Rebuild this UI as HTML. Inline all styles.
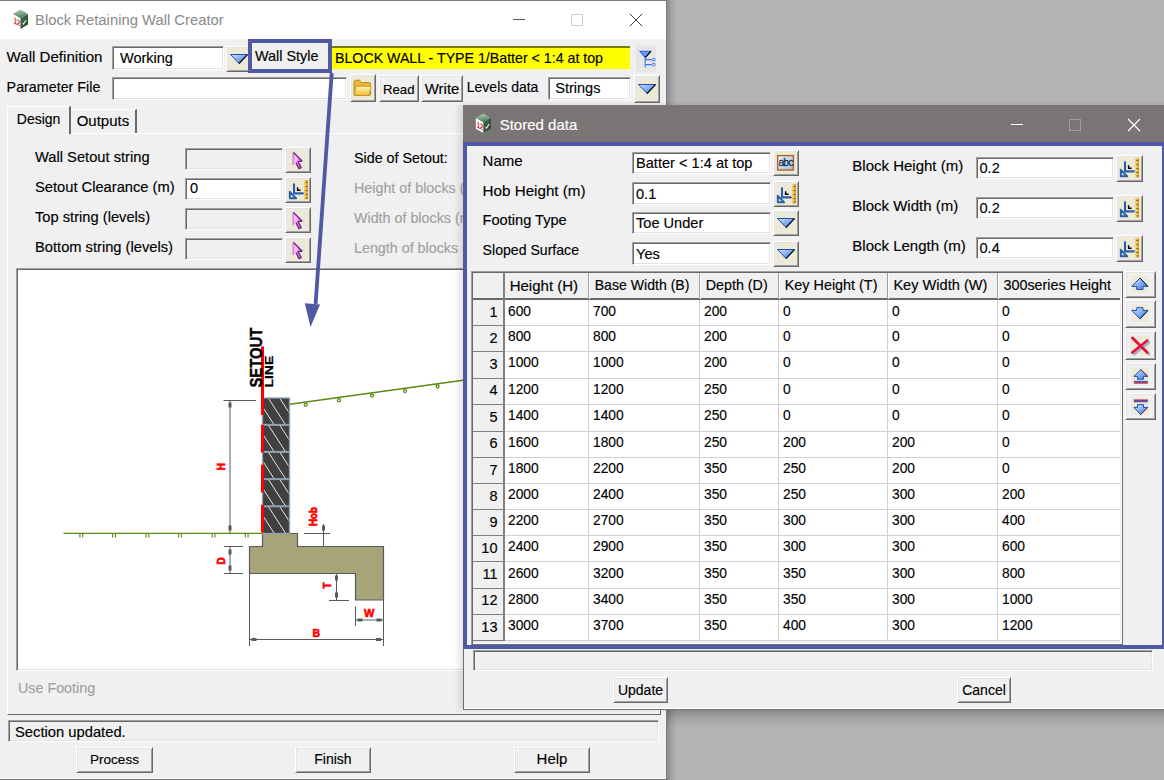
<!DOCTYPE html>
<html><head><meta charset="utf-8"><title>Block Retaining Wall Creator</title>
<style>
html,body{margin:0;padding:0;}
body{width:1164px;height:780px;overflow:hidden;position:relative;background:#b4b4b4;font-family:"Liberation Sans",sans-serif;}
.a{position:absolute;box-sizing:border-box;}
.t{white-space:pre;line-height:1;-webkit-text-stroke:0.15px currentColor;}
svg.a{overflow:visible;}
</style></head><body>
<div class="a" style="left:667px;top:0px;width:10px;height:780px;background:linear-gradient(to right,#8a8a8a,#a4a4a4 45%,#b4b4b4);"></div>
<div class="a" style="left:0px;top:0px;width:667px;height:780px;background:#f0f0f0;border-top:1px solid #7a7a7a;border-right:1px solid #7e7e7e;box-sizing:border-box;"></div>
<div class="a" style="left:0px;top:1px;width:666px;height:38px;background:#fff;"></div>
<svg class="a" style="left:12px;top:9px" width="18" height="22" viewBox="0 0 18 22"><defs><linearGradient id="gc" x1="0" y1="0" x2="0.3" y2="1"><stop offset="0" stop-color="#b4d4bc"/><stop offset="1" stop-color="#4e7e62"/></linearGradient><linearGradient id="gc2" x1="0" y1="0" x2="1" y2="1"><stop offset="0" stop-color="#3e6e52"/><stop offset="1" stop-color="#24482f"/></linearGradient></defs><polygon points="8.5,0.5 16,5 8.5,9.5 0.8,5" fill="url(#gc)"/><polygon points="0.8,5 8.5,9.5 8.5,20 0.8,15.8" fill="#fafafa"/><polygon points="8.5,9.5 16,5 16,15.5 8.5,20" fill="url(#gc2)"/><g transform="skewY(27)"><text x="2.6" y="13.2" font-family="Liberation Sans" font-size="8.5" font-weight="bold" fill="#d42a34" transform="scale(0.72,1)" letter-spacing="-0.3">12</text></g><path d="M11.2 15.6l3-4.6M10.6 14.8l2-0.9" stroke="#e8f0e8" stroke-width="1.1"/></svg>
<div class="a t " style="left:35.3px;top:12.33px;font-size:15.2px;color:#8a8a8a;-webkit-text-stroke:0;transform:scaleX(0.975);transform-origin:0 0;">Block Retaining Wall Creator</div>
<div class="a" style="left:513px;top:19px;width:12px;height:1px;background:#555;"></div>
<div class="a" style="left:571px;top:14px;width:12px;height:12px;border:1px solid #ccc;box-sizing:border-box;"></div>
<svg class="a" style="left:629px;top:13px" width="14" height="14" viewBox="0 0 14 14"><path d="M1 1L13 13M13 1L1 13" stroke="#444" stroke-width="1"/></svg>
<div class="a t " style="left:6.6px;top:49.22px;font-size:15.1px;color:#000;">Wall Definition</div>
<div class="a" style="left:112px;top:46px;width:112px;height:24px;background:#fff;border:1px solid;border-color:#a0a0a0 #fff #fff #a0a0a0;box-shadow:inset 1px 1px #696969,inset -1px -1px #e3e3e3;"></div>
<div class="a t " style="left:120px;top:51.13px;font-size:14.5px;color:#000;">Working</div>
<div class="a" style="left:226px;top:46px;width:26px;height:26px;background:#ece9d8;border:1px solid;border-color:#fff #696969 #696969 #fff;box-shadow:inset 1px 1px #e3e3e3,inset -1px -1px #a0a0a0;"></div>
<svg class="a" style="left:226px;top:46px" width="26" height="26" viewBox="0 0 26 26"><defs><linearGradient id="gd" x1="0" y1="0" x2="1" y2="1"><stop offset="0" stop-color="#cfe0ff"/><stop offset="1" stop-color="#3a78e0"/></linearGradient></defs><polygon points="4.5,8.5 21.5,8.5 13.0,17.5" fill="url(#gd)" stroke="#1f4fb0" stroke-width="1"/><path d="M21.5 8.5 L13.0 17.5" stroke="#101820" stroke-width="1.3"/></svg>
<div class="a t " style="left:255px;top:48.81px;font-size:14.4px;color:#000;">Wall Style</div>
<div class="a" style="left:331px;top:46px;width:299px;height:23px;background:#ffff00;border-top:2px solid #7a7a00;box-sizing:border-box;"></div>
<div class="a t " style="left:335px;top:50.98px;font-size:14.2px;color:#000;">BLOCK WALL - TYPE 1/Batter &lt; 1:4 at top</div>
<div class="a" style="left:636px;top:45px;width:20px;height:27px;background:#e6e6e6;"></div>
<svg class="a" style="left:636px;top:45px" width="20" height="27" viewBox="0 0 20 27"><polygon points="4,6.3 14.8,6.3 9.2,12.6" fill="#6aa0f0" stroke="#2a66d8" stroke-width="1.1"/><path d="M14.8 6.3L9.2 12.6" stroke="#000" stroke-width="1.2"/><path d="M9.2 12.6v10M9.2 14.6h6.5M9.2 19.6h6.5" stroke="#3a78e8" stroke-width="1.1" fill="none"/><ellipse cx="17.6" cy="14.6" rx="1.7" ry="1.3" fill="none" stroke="#3a78e8" stroke-width="1"/><ellipse cx="17.6" cy="19.6" rx="1.7" ry="1.3" fill="none" stroke="#3a78e8" stroke-width="1"/></svg>
<div class="a t " style="left:6.6px;top:79.50px;font-size:14.3px;color:#000;">Parameter File</div>
<div class="a" style="left:112px;top:77px;width:235px;height:23px;background:#fff;border:1px solid;border-color:#a0a0a0 #fff #fff #a0a0a0;box-shadow:inset 1px 1px #696969,inset -1px -1px #e3e3e3;"></div>
<div class="a" style="left:350px;top:74px;width:26px;height:28px;background:#ece9d8;border:1px solid;border-color:#fff #696969 #696969 #fff;box-shadow:inset 1px 1px #e3e3e3,inset -1px -1px #a0a0a0;"></div>
<svg class="a" style="left:350px;top:74px" width="26" height="28" viewBox="0 0 26 28"><defs><linearGradient id="gf" x1="0" y1="0" x2="0" y2="1"><stop offset="0" stop-color="#fff4b0"/><stop offset="1" stop-color="#f0c040"/></linearGradient></defs><path d="M4 8.2q0-2 2-2h3.5l2 2.4h7.2q1.8 0 1.8 1.8v9.8q0 1.2-1.2 1.2H5.2q-1.2 0-1.2-1.2z" fill="#e8b838" stroke="#c08818" stroke-width="1"/><path d="M5.4 13.2q0.3-1 1.3-1h13.6q1 0 0.7 1l-1.6 7.4q-0.2 0.8-1 0.8H4.6z" fill="url(#gf)" stroke="#c89020" stroke-width="0.9"/></svg>
<div class="a" style="left:379px;top:75px;width:40px;height:27px;background:#f0f0f0;border:1px solid;border-color:#fff #696969 #696969 #fff;box-shadow:inset 1px 1px #e3e3e3,inset -1px -1px #a0a0a0;"></div>
<div class="a t " style="left:383px;top:82.83px;font-size:13.2px;color:#000;">Read</div>
<div class="a" style="left:421px;top:75px;width:42px;height:27px;background:#f0f0f0;border:1px solid;border-color:#fff #696969 #696969 #fff;box-shadow:inset 1px 1px #e3e3e3,inset -1px -1px #a0a0a0;"></div>
<div class="a t " style="left:424.7px;top:81.30px;font-size:15px;color:#000;">Write</div>
<div class="a t " style="left:466.8px;top:79.65px;font-size:14px;color:#000;">Levels data</div>
<div class="a" style="left:548px;top:77px;width:83px;height:23px;background:#fff;border:1px solid;border-color:#a0a0a0 #fff #fff #a0a0a0;box-shadow:inset 1px 1px #696969,inset -1px -1px #e3e3e3;"></div>
<div class="a t " style="left:555.3px;top:81.43px;font-size:14.5px;color:#000;">Strings</div>
<div class="a" style="left:634px;top:75px;width:26px;height:28px;background:#ece9d8;border:1px solid;border-color:#fff #696969 #696969 #fff;box-shadow:inset 1px 1px #e3e3e3,inset -1px -1px #a0a0a0;"></div>
<svg class="a" style="left:634px;top:75px" width="26" height="28" viewBox="0 0 26 28"><defs><linearGradient id="gd" x1="0" y1="0" x2="1" y2="1"><stop offset="0" stop-color="#cfe0ff"/><stop offset="1" stop-color="#3a78e0"/></linearGradient></defs><polygon points="4.5,9.5 21.5,9.5 13.0,18.5" fill="url(#gd)" stroke="#1f4fb0" stroke-width="1"/><path d="M21.5 9.5 L13.0 18.5" stroke="#101820" stroke-width="1.3"/></svg>
<div class="a" style="left:7px;top:133px;width:654px;height:582px;border:1px solid;border-color:#fff #696969 #696969 #fff;box-sizing:border-box;"></div>
<div class="a" style="left:7px;top:106px;width:64px;height:28px;background:#f0f0f0;border-top:1px solid #fff;border-left:1px solid #fff;border-right:2px solid #696969;box-sizing:border-box;"></div>
<div class="a" style="left:71px;top:109px;width:66px;height:24px;background:#f0f0f0;border-top:1px solid #fff;border-right:2px solid #696969;box-sizing:border-box;"></div>
<div class="a t " style="left:16.8px;top:111.95px;font-size:14px;color:#000;">Design</div>
<div class="a t " style="left:76.7px;top:113.00px;font-size:15px;color:#000;">Outputs</div>
<div class="a t " style="left:35px;top:150.26px;font-size:14.7px;color:#000;">Wall Setout string</div>
<div class="a" style="left:185px;top:148px;width:98px;height:22px;background:#f0f0f0;border:1px solid;border-color:#a0a0a0 #fff #fff #a0a0a0;box-shadow:inset 1px 1px #696969,inset -1px -1px #e3e3e3;"></div>
<div class="a" style="left:285px;top:146.5px;width:26px;height:26.0px;background:#ece9d8;border:1px solid;border-color:#fff #696969 #696969 #fff;box-shadow:inset 1px 1px #e3e3e3,inset -1px -1px #a0a0a0;"></div>
<svg class="a" style="left:285px;top:146.5px" width="26" height="26.0" viewBox="0 0 26 26.0"><defs><linearGradient id="gp" x1="0" y1="0" x2="1" y2="0"><stop offset="0" stop-color="#e8a0e8"/><stop offset="0.35" stop-color="#f8c8f8"/><stop offset="1" stop-color="#d840d0"/></linearGradient></defs><polygon points="8,5 17,14 13,14.6 16.2,20.6 14,21.6 11,15.6 8,18.4" fill="url(#gp)"/><path d="M8.3 5.3L17 14L13 14.6L16.2 20.6L14 21.6L11 15.6" fill="none" stroke="#702088" stroke-width="1.3" stroke-linejoin="round"/><path d="M8 5.5V18.2" stroke="#d070d8" stroke-width="1"/></svg>
<div class="a t " style="left:35px;top:180.26px;font-size:14.7px;color:#000;">Setout Clearance (m)</div>
<div class="a" style="left:185px;top:178px;width:98px;height:22px;background:#fff;border:1px solid;border-color:#a0a0a0 #fff #fff #a0a0a0;box-shadow:inset 1px 1px #696969,inset -1px -1px #e3e3e3;"></div>
<div class="a" style="left:285px;top:176.5px;width:26px;height:26.0px;background:#ece9d8;border:1px solid;border-color:#fff #696969 #696969 #fff;box-shadow:inset 1px 1px #e3e3e3,inset -1px -1px #a0a0a0;"></div>
<svg class="a" style="left:285px;top:176.5px" width="26" height="26.0" viewBox="0 0 26 26.0"><defs><linearGradient id="gr" x1="0" y1="0" x2="1" y2="0"><stop offset="0" stop-color="#f8d878"/><stop offset="1" stop-color="#d8a030"/></linearGradient></defs><rect x="19" y="3" width="4" height="19.5" fill="url(#gr)"/><path d="M20.5 5.5h2M20.5 9.5h2M20.5 13.5h2M20.5 17.5h2M20.5 21h2" stroke="#7a5a10" stroke-width="1"/><path d="M9 7.2V16.4H17.8" stroke="#2a5fa8" stroke-width="2.1" stroke-linecap="round" fill="none"/><polygon points="4.8,14.8 4.8,21.3 11.2,21.3" fill="#d0dcea" stroke="#2a5fa8" stroke-width="1.9" stroke-linejoin="round"/><path d="M12.6 10.2V13.3H15.6" stroke="#000" stroke-width="1.4" fill="none"/></svg>
<div class="a t " style="left:35px;top:210.26px;font-size:14.7px;color:#000;">Top string (levels)</div>
<div class="a" style="left:185px;top:208px;width:98px;height:22px;background:#f0f0f0;border:1px solid;border-color:#a0a0a0 #fff #fff #a0a0a0;box-shadow:inset 1px 1px #696969,inset -1px -1px #e3e3e3;"></div>
<div class="a" style="left:285px;top:206.5px;width:26px;height:26.0px;background:#ece9d8;border:1px solid;border-color:#fff #696969 #696969 #fff;box-shadow:inset 1px 1px #e3e3e3,inset -1px -1px #a0a0a0;"></div>
<svg class="a" style="left:285px;top:206.5px" width="26" height="26.0" viewBox="0 0 26 26.0"><defs><linearGradient id="gp" x1="0" y1="0" x2="1" y2="0"><stop offset="0" stop-color="#e8a0e8"/><stop offset="0.35" stop-color="#f8c8f8"/><stop offset="1" stop-color="#d840d0"/></linearGradient></defs><polygon points="8,5 17,14 13,14.6 16.2,20.6 14,21.6 11,15.6 8,18.4" fill="url(#gp)"/><path d="M8.3 5.3L17 14L13 14.6L16.2 20.6L14 21.6L11 15.6" fill="none" stroke="#702088" stroke-width="1.3" stroke-linejoin="round"/><path d="M8 5.5V18.2" stroke="#d070d8" stroke-width="1"/></svg>
<div class="a t " style="left:35px;top:240.26px;font-size:14.7px;color:#000;">Bottom string (levels)</div>
<div class="a" style="left:185px;top:238px;width:98px;height:22px;background:#f0f0f0;border:1px solid;border-color:#a0a0a0 #fff #fff #a0a0a0;box-shadow:inset 1px 1px #696969,inset -1px -1px #e3e3e3;"></div>
<div class="a" style="left:285px;top:236.5px;width:26px;height:26.0px;background:#ece9d8;border:1px solid;border-color:#fff #696969 #696969 #fff;box-shadow:inset 1px 1px #e3e3e3,inset -1px -1px #a0a0a0;"></div>
<svg class="a" style="left:285px;top:236.5px" width="26" height="26.0" viewBox="0 0 26 26.0"><defs><linearGradient id="gp" x1="0" y1="0" x2="1" y2="0"><stop offset="0" stop-color="#e8a0e8"/><stop offset="0.35" stop-color="#f8c8f8"/><stop offset="1" stop-color="#d840d0"/></linearGradient></defs><polygon points="8,5 17,14 13,14.6 16.2,20.6 14,21.6 11,15.6 8,18.4" fill="url(#gp)"/><path d="M8.3 5.3L17 14L13 14.6L16.2 20.6L14 21.6L11 15.6" fill="none" stroke="#702088" stroke-width="1.3" stroke-linejoin="round"/><path d="M8 5.5V18.2" stroke="#d070d8" stroke-width="1"/></svg>
<div class="a t " style="left:190px;top:180.73px;font-size:14.5px;color:#000;">0</div>
<div class="a t " style="left:354px;top:150.60px;font-size:14.3px;color:#000;">Side of Setout:</div>
<div class="a t " style="left:354px;top:180.60px;font-size:14.3px;color:#a0a0a0;">Height of blocks (m)</div>
<div class="a t " style="left:354px;top:210.60px;font-size:14.3px;color:#a0a0a0;">Width of blocks (m)</div>
<div class="a t " style="left:354px;top:240.60px;font-size:14.3px;color:#a0a0a0;">Length of blocks (m)</div>
<div class="a" style="left:16px;top:268px;width:646px;height:403px;background:#fff;border:1px solid;border-color:#a0a0a0 #fff #fff #a0a0a0;box-shadow:inset 1px 1px #696969,inset -1px -1px #e3e3e3;"></div>
<div class="a t " style="left:18px;top:680.90px;font-size:14.3px;color:#a0a0a0;">Use Footing</div>
<div class="a" style="left:8px;top:720px;width:651px;height:22px;background:#f0f0f0;border:1px solid;border-color:#a0a0a0 #fff #fff #a0a0a0;box-shadow:inset 1px 1px #696969,inset -1px -1px #e3e3e3;"></div>
<div class="a t " style="left:15px;top:724.51px;font-size:14.75px;color:#000;">Section updated.</div>
<div class="a" style="left:76px;top:747px;width:77px;height:26px;background:#f0f0f0;border:1px solid;border-color:#fff #696969 #696969 #fff;box-shadow:inset 1px 1px #e3e3e3,inset -1px -1px #a0a0a0;"></div>
<div class="a t" style="left:-85.5px;width:400px;text-align:center;top:752.57px;font-size:13.5px;color:#000;">Process</div>
<div class="a" style="left:295px;top:747px;width:76px;height:26px;background:#f0f0f0;border:1px solid;border-color:#fff #696969 #696969 #fff;box-shadow:inset 1px 1px #e3e3e3,inset -1px -1px #a0a0a0;"></div>
<div class="a t" style="left:133.0px;width:400px;text-align:center;top:752.15px;font-size:14px;color:#000;">Finish</div>
<div class="a" style="left:514px;top:747px;width:76px;height:26px;background:#f0f0f0;border:1px solid;border-color:#fff #696969 #696969 #fff;box-shadow:inset 1px 1px #e3e3e3,inset -1px -1px #a0a0a0;"></div>
<div class="a t" style="left:352.0px;width:400px;text-align:center;top:751.30px;font-size:15px;color:#000;">Help</div>
<div class="a" style="left:0px;top:778px;width:666px;height:1px;background:#fff;"></div>
<div class="a" style="left:0px;top:779px;width:668px;height:1px;background:#6e6e6e;"></div>
<svg class="a" style="left:0;top:0" width="463" height="680" viewBox="0 0 463 680"><polygon points="262.5,533.5 297.5,533.5 297.5,546.5 383.5,546.5 383.5,600 355.5,600 355.5,573.5 249.5,573.5 249.5,546.5 262.5,546.5" fill="#a6a478" stroke="#5a5a5a" stroke-width="1.2"/><rect x="262.5" y="398" width="27" height="135.5" fill="#404040" stroke="#90a3b4" stroke-width="1.3"/><clipPath id="cb"><rect x="263.5" y="399" width="25" height="134"/></clipPath><path d="M245.5 397.9 L262.9193548387097 424.9 M256.8 397.9 L274.2193548387097 424.9 M268.2 397.9 L285.6193548387097 424.9 M279.6 397.9 L297.0193548387097 424.9 M245.5 424.9 L262.9193548387097 451.9 M256.8 424.9 L274.2193548387097 451.9 M268.2 424.9 L285.6193548387097 451.9 M279.6 424.9 L297.0193548387097 451.9 M245.5 451.9 L263.0483870967742 479.1 M256.8 451.9 L274.3483870967742 479.1 M268.2 451.9 L285.7483870967742 479.1 M279.6 451.9 L297.14838709677423 479.1 M245.5 479.1 L263.0483870967742 506.3 M256.8 479.1 L274.3483870967742 506.3 M268.2 479.1 L285.7483870967742 506.3 M279.6 479.1 L297.14838709677423 506.3 M245.5 506.3 L262.9838709677419 533.4 M256.8 506.3 L274.2838709677419 533.4 M268.2 506.3 L285.6838709677419 533.4 M279.6 506.3 L297.0838709677419 533.4" stroke="#e8e8e8" stroke-width="1" clip-path="url(#cb)"/><rect x="262.5" y="423.9" width="27" height="2" fill="#90a3b4"/><rect x="262.5" y="450.9" width="27" height="2" fill="#90a3b4"/><rect x="262.5" y="478.1" width="27" height="2" fill="#90a3b4"/><rect x="262.5" y="505.3" width="27" height="2" fill="#90a3b4"/><rect x="261" y="346.5" width="3" height="68.5" fill="#ff0000"/><rect x="261" y="424.8" width="3" height="27.69999999999999" fill="#ff0000"/><rect x="261" y="464.8" width="3" height="27.69999999999999" fill="#ff0000"/><rect x="261" y="504.8" width="3" height="27.69999999999999" fill="#ff0000"/><path d="M63.5 533.4H262" stroke="#5a8a14" stroke-width="1.4"/><path d="M79.9 534v3.5M82.7 534v3.5" stroke="#5a8a14" stroke-width="1.1" fill="none"/><path d="M112.60000000000001 534v3.5M115.4 534v3.5" stroke="#5a8a14" stroke-width="1.1" fill="none"/><path d="M146.1 534v3.5M148.9 534v3.5" stroke="#5a8a14" stroke-width="1.1" fill="none"/><path d="M178.7 534v3.5M181.5 534v3.5" stroke="#5a8a14" stroke-width="1.1" fill="none"/><path d="M212.2 534v3.5M215.0 534v3.5" stroke="#5a8a14" stroke-width="1.1" fill="none"/><path d="M245.29999999999998 534v3.5M248.1 534v3.5" stroke="#5a8a14" stroke-width="1.1" fill="none"/><path d="M289.8 404.2L463 380.2" stroke="#5a8a14" stroke-width="1.4"/><circle cx="305.7" cy="404.79626" r="1.5" fill="none" stroke="#5a8a14" stroke-width="1.3"/><circle cx="339" cy="400.18088" r="1.5" fill="none" stroke="#5a8a14" stroke-width="1.3"/><circle cx="372" cy="395.60708" r="1.5" fill="none" stroke="#5a8a14" stroke-width="1.3"/><circle cx="405" cy="391.03328" r="1.5" fill="none" stroke="#5a8a14" stroke-width="1.3"/><circle cx="437.6" cy="386.51492" r="1.5" fill="none" stroke="#5a8a14" stroke-width="1.3"/><path d="M223.5 400.5H256 M230 400.5V533 M224 546.5H243 M224 573.5H243 M230 546.5V573.5 M304 533.5H330 M323.5 524V546.5 M336.5 573.5V600 M329 600.5H349 M355.5 606.5V626 M383.5 600V646 M355.5 620H383.5 M249.5 573.5V646 M249.5 639.5H383.5" stroke="#5a5a5a" stroke-width="1"/><rect x="228.5" y="402.5" width="3" height="5" fill="#5a5a5a"/><rect x="228.5" y="525.5" width="3" height="5" fill="#5a5a5a"/><rect x="228.5" y="549.5" width="3" height="5" fill="#5a5a5a"/><rect x="228.5" y="565.5" width="3" height="5" fill="#5a5a5a"/><rect x="322.0" y="525.5" width="3" height="5" fill="#5a5a5a"/><rect x="335.0" y="575.5" width="3" height="5" fill="#5a5a5a"/><rect x="335.0" y="592.5" width="3" height="5" fill="#5a5a5a"/><rect x="357.5" y="618.5" width="5" height="3" fill="#5a5a5a"/><rect x="376.5" y="618.5" width="5" height="3" fill="#5a5a5a"/><rect x="251.5" y="638.0" width="5" height="3" fill="#5a5a5a"/><rect x="376.0" y="638.0" width="5" height="3" fill="#5a5a5a"/><text font-family="Liberation Sans" font-weight="bold" stroke="#000" stroke-width="0.4" font-size="15" transform="translate(262,387.6) rotate(-90) scale(0.99,1.16)">SETOUT</text><text font-family="Liberation Sans" font-weight="bold" stroke="#000" stroke-width="0.3" font-size="12" transform="translate(273.3,387.6) rotate(-90) scale(1.165,0.97)">LINE</text><text font-family="Liberation Sans" font-weight="bold" stroke="#ff0000" stroke-width="0.6" font-size="10" fill="#ff0000" transform="translate(224.5,470.2) rotate(-90) scale(1,1.15)">H</text><text font-family="Liberation Sans" font-weight="bold" stroke="#ff0000" stroke-width="0.6" font-size="10" fill="#ff0000" transform="translate(224.7,564.4) rotate(-90) scale(1,1.15)">D</text><text font-family="Liberation Sans" font-weight="bold" stroke="#ff0000" stroke-width="0.6" font-size="9.5" fill="#ff0000" transform="translate(317.2,526) rotate(-90) scale(1.02,1.2)">Hob</text><text font-family="Liberation Sans" font-weight="bold" stroke="#ff0000" stroke-width="0.6" font-size="10" fill="#ff0000" transform="translate(330.6,588.5) rotate(-90) scale(1,1.1)">T</text><text font-family="Liberation Sans" font-weight="bold" stroke="#ff0000" stroke-width="0.6" font-size="11" fill="#ff0000" x="364" y="617.3">W</text><text font-family="Liberation Sans" font-weight="bold" stroke="#ff0000" stroke-width="0.6" font-size="10.5" fill="#ff0000" x="312.6" y="637">B</text></svg>
<div class="a" style="left:248px;top:39px;width:84px;height:34px;border:4px solid #5158a4;box-sizing:border-box;"></div>
<svg class="a" style="left:290px;top:60px" width="50" height="280" viewBox="0 0 50 280"><path d="M41.7 13L25.6 244" stroke="#5158a4" stroke-width="3.8"/><polygon points="14.8,243.2 30,244.6 20.5,267" fill="#5158a4"/></svg>
<div class="a" style="left:454px;top:105px;width:9px;height:604px;background:linear-gradient(to right,rgba(0,0,0,0),rgba(0,0,0,0.10));"></div>
<div class="a" style="left:463px;top:101px;width:701px;height:4px;background:linear-gradient(to bottom,rgba(0,0,0,0),rgba(0,0,0,0.06));"></div>
<div class="a" style="left:667px;top:710px;width:497px;height:18px;background:linear-gradient(to bottom,rgba(0,0,0,0.24),rgba(0,0,0,0.08) 50%,rgba(0,0,0,0));"></div>
<div class="a" style="left:456px;top:710px;width:211px;height:3px;background:linear-gradient(to bottom,rgba(0,0,0,0.06),rgba(0,0,0,0));"></div>
<div class="a" style="left:463px;top:105px;width:701px;height:605px;background:#f0f0f0;border-left:1px solid #707070;border-bottom:1px solid #7a7676;box-sizing:border-box;"></div>
<div class="a" style="left:464px;top:708px;width:700px;height:1px;background:#fff;"></div>
<div class="a" style="left:463px;top:105px;width:701px;height:37px;background:#7a7575;"></div>
<svg class="a" style="left:475px;top:113px" width="18" height="22" viewBox="0 0 18 22"><defs><linearGradient id="gc" x1="0" y1="0" x2="0.3" y2="1"><stop offset="0" stop-color="#b4d4bc"/><stop offset="1" stop-color="#4e7e62"/></linearGradient><linearGradient id="gc2" x1="0" y1="0" x2="1" y2="1"><stop offset="0" stop-color="#3e6e52"/><stop offset="1" stop-color="#24482f"/></linearGradient></defs><polygon points="8.5,0.5 16,5 8.5,9.5 0.8,5" fill="url(#gc)"/><polygon points="0.8,5 8.5,9.5 8.5,20 0.8,15.8" fill="#fafafa"/><polygon points="8.5,9.5 16,5 16,15.5 8.5,20" fill="url(#gc2)"/><g transform="skewY(27)"><text x="2.6" y="13.2" font-family="Liberation Sans" font-size="8.5" font-weight="bold" fill="#d42a34" transform="scale(0.72,1)" letter-spacing="-0.3">12</text></g><path d="M11.2 15.6l3-4.6M10.6 14.8l2-0.9" stroke="#e8f0e8" stroke-width="1.1"/></svg>
<div class="a t " style="left:499.7px;top:117.30px;font-size:15px;color:#fff;">Stored data</div>
<div class="a" style="left:1011px;top:124px;width:12px;height:1px;background:#fff;"></div>
<div class="a" style="left:1069px;top:119px;width:12px;height:12px;border:1px solid #a09a99;box-sizing:border-box;"></div>
<svg class="a" style="left:1127px;top:118px" width="14" height="14" viewBox="0 0 14 14"><path d="M1 1L13 13M13 1L1 13" stroke="#fff" stroke-width="1.2"/></svg>
<div class="a" style="left:463px;top:142px;width:703px;height:507px;border:4px solid #5158a4;box-sizing:border-box;"></div>
<div class="a t " style="left:482.6px;top:152.70px;font-size:15px;color:#000;">Name</div>
<div class="a" style="left:631.5px;top:151.5px;width:139.0px;height:22.5px;background:#fff;border:1px solid;border-color:#a0a0a0 #fff #fff #a0a0a0;box-shadow:inset 1px 1px #696969,inset -1px -1px #e3e3e3;"></div>
<div class="a t " style="left:636px;top:156.14px;font-size:14.6px;color:#000;">Batter &lt; 1:4 at top</div>
<div class="a" style="left:773px;top:150.0px;width:26px;height:26.0px;background:#ece9d8;border:1px solid;border-color:#fff #696969 #696969 #fff;box-shadow:inset 1px 1px #e3e3e3,inset -1px -1px #a0a0a0;"></div>
<svg class="a" style="left:773px;top:150.0px" width="26" height="26.0" viewBox="0 0 26 26.0"><defs><linearGradient id="gabc" x1="0" y1="0" x2="1" y2="1"><stop offset="0" stop-color="#e8f4fa"/><stop offset="1" stop-color="#9cc4dc"/></linearGradient></defs><rect x="4.6" y="5.6" width="15.8" height="14.4" fill="url(#gabc)" stroke="#b86028" stroke-width="1.4"/><text x="12.5" y="16" font-family="Liberation Sans" font-size="10.5" fill="#1c2c4c" stroke="#1c2c4c" stroke-width="0.3" text-anchor="middle" letter-spacing="-0.9">abc</text></svg>
<div class="a t " style="left:482.6px;top:182.93px;font-size:15.2px;color:#000;">Hob Height (m)</div>
<div class="a" style="left:631.5px;top:182px;width:139.0px;height:22.5px;background:#fff;border:1px solid;border-color:#a0a0a0 #fff #fff #a0a0a0;box-shadow:inset 1px 1px #696969,inset -1px -1px #e3e3e3;"></div>
<div class="a t " style="left:636px;top:186.64px;font-size:14.6px;color:#000;">0.1</div>
<div class="a" style="left:773px;top:180.5px;width:26px;height:26.0px;background:#ece9d8;border:1px solid;border-color:#fff #696969 #696969 #fff;box-shadow:inset 1px 1px #e3e3e3,inset -1px -1px #a0a0a0;"></div>
<svg class="a" style="left:773px;top:180.5px" width="26" height="26.0" viewBox="0 0 26 26.0"><defs><linearGradient id="gr" x1="0" y1="0" x2="1" y2="0"><stop offset="0" stop-color="#f8d878"/><stop offset="1" stop-color="#d8a030"/></linearGradient></defs><rect x="19" y="3" width="4" height="19.5" fill="url(#gr)"/><path d="M20.5 5.5h2M20.5 9.5h2M20.5 13.5h2M20.5 17.5h2M20.5 21h2" stroke="#7a5a10" stroke-width="1"/><path d="M9 7.2V16.4H17.8" stroke="#2a5fa8" stroke-width="2.1" stroke-linecap="round" fill="none"/><polygon points="4.8,14.8 4.8,21.3 11.2,21.3" fill="#d0dcea" stroke="#2a5fa8" stroke-width="1.9" stroke-linejoin="round"/><path d="M12.6 10.2V13.3H15.6" stroke="#000" stroke-width="1.4" fill="none"/></svg>
<div class="a t " style="left:482.6px;top:213.24px;font-size:14.6px;color:#000;">Footing Type</div>
<div class="a" style="left:631.5px;top:211.5px;width:139.0px;height:22.5px;background:#fff;border:1px solid;border-color:#a0a0a0 #fff #fff #a0a0a0;box-shadow:inset 1px 1px #696969,inset -1px -1px #e3e3e3;"></div>
<div class="a t " style="left:636px;top:216.14px;font-size:14.6px;color:#000;">Toe Under</div>
<div class="a" style="left:773px;top:210.0px;width:26px;height:26.0px;background:#ece9d8;border:1px solid;border-color:#fff #696969 #696969 #fff;box-shadow:inset 1px 1px #e3e3e3,inset -1px -1px #a0a0a0;"></div>
<svg class="a" style="left:773px;top:210.0px" width="26" height="26.0" viewBox="0 0 26 26.0"><defs><linearGradient id="gd" x1="0" y1="0" x2="1" y2="1"><stop offset="0" stop-color="#cfe0ff"/><stop offset="1" stop-color="#3a78e0"/></linearGradient></defs><polygon points="4.5,8.5 21.5,8.5 13.0,17.5" fill="url(#gd)" stroke="#1f4fb0" stroke-width="1"/><path d="M21.5 8.5 L13.0 17.5" stroke="#101820" stroke-width="1.3"/></svg>
<div class="a t " style="left:482.6px;top:243.26px;font-size:14.1px;color:#000;">Sloped Surface</div>
<div class="a" style="left:631.5px;top:242px;width:139.0px;height:22.5px;background:#fff;border:1px solid;border-color:#a0a0a0 #fff #fff #a0a0a0;box-shadow:inset 1px 1px #696969,inset -1px -1px #e3e3e3;"></div>
<div class="a t " style="left:636px;top:246.64px;font-size:14.6px;color:#000;">Yes</div>
<div class="a" style="left:773px;top:240.5px;width:26px;height:26.0px;background:#ece9d8;border:1px solid;border-color:#fff #696969 #696969 #fff;box-shadow:inset 1px 1px #e3e3e3,inset -1px -1px #a0a0a0;"></div>
<svg class="a" style="left:773px;top:240.5px" width="26" height="26.0" viewBox="0 0 26 26.0"><defs><linearGradient id="gd" x1="0" y1="0" x2="1" y2="1"><stop offset="0" stop-color="#cfe0ff"/><stop offset="1" stop-color="#3a78e0"/></linearGradient></defs><polygon points="4.5,8.5 21.5,8.5 13.0,17.5" fill="url(#gd)" stroke="#1f4fb0" stroke-width="1"/><path d="M21.5 8.5 L13.0 17.5" stroke="#101820" stroke-width="1.3"/></svg>
<div class="a t " style="left:852.3px;top:157.50px;font-size:15px;color:#000;">Block Height (m)</div>
<div class="a" style="left:975.5px;top:157px;width:138.5px;height:21.5px;background:#fff;border:1px solid;border-color:#a0a0a0 #fff #fff #a0a0a0;box-shadow:inset 1px 1px #696969,inset -1px -1px #e3e3e3;"></div>
<div class="a t " style="left:979.5px;top:161.14px;font-size:14.6px;color:#000;">0.2</div>
<div class="a" style="left:1116px;top:155px;width:27px;height:27px;background:#ece9d8;border:1px solid;border-color:#fff #696969 #696969 #fff;box-shadow:inset 1px 1px #e3e3e3,inset -1px -1px #a0a0a0;"></div>
<svg class="a" style="left:1116px;top:155px" width="27" height="27" viewBox="0 0 27 27"><defs><linearGradient id="gr" x1="0" y1="0" x2="1" y2="0"><stop offset="0" stop-color="#f8d878"/><stop offset="1" stop-color="#d8a030"/></linearGradient></defs><rect x="19" y="3" width="4" height="19.5" fill="url(#gr)"/><path d="M20.5 5.5h2M20.5 9.5h2M20.5 13.5h2M20.5 17.5h2M20.5 21h2" stroke="#7a5a10" stroke-width="1"/><path d="M9 7.2V16.4H17.8" stroke="#2a5fa8" stroke-width="2.1" stroke-linecap="round" fill="none"/><polygon points="4.8,14.8 4.8,21.3 11.2,21.3" fill="#d0dcea" stroke="#2a5fa8" stroke-width="1.9" stroke-linejoin="round"/><path d="M12.6 10.2V13.3H15.6" stroke="#000" stroke-width="1.4" fill="none"/></svg>
<div class="a t " style="left:852.3px;top:197.50px;font-size:15px;color:#000;">Block Width (m)</div>
<div class="a" style="left:975.5px;top:197px;width:138.5px;height:21.5px;background:#fff;border:1px solid;border-color:#a0a0a0 #fff #fff #a0a0a0;box-shadow:inset 1px 1px #696969,inset -1px -1px #e3e3e3;"></div>
<div class="a t " style="left:979.5px;top:201.14px;font-size:14.6px;color:#000;">0.2</div>
<div class="a" style="left:1116px;top:195px;width:27px;height:27px;background:#ece9d8;border:1px solid;border-color:#fff #696969 #696969 #fff;box-shadow:inset 1px 1px #e3e3e3,inset -1px -1px #a0a0a0;"></div>
<svg class="a" style="left:1116px;top:195px" width="27" height="27" viewBox="0 0 27 27"><defs><linearGradient id="gr" x1="0" y1="0" x2="1" y2="0"><stop offset="0" stop-color="#f8d878"/><stop offset="1" stop-color="#d8a030"/></linearGradient></defs><rect x="19" y="3" width="4" height="19.5" fill="url(#gr)"/><path d="M20.5 5.5h2M20.5 9.5h2M20.5 13.5h2M20.5 17.5h2M20.5 21h2" stroke="#7a5a10" stroke-width="1"/><path d="M9 7.2V16.4H17.8" stroke="#2a5fa8" stroke-width="2.1" stroke-linecap="round" fill="none"/><polygon points="4.8,14.8 4.8,21.3 11.2,21.3" fill="#d0dcea" stroke="#2a5fa8" stroke-width="1.9" stroke-linejoin="round"/><path d="M12.6 10.2V13.3H15.6" stroke="#000" stroke-width="1.4" fill="none"/></svg>
<div class="a t " style="left:852.3px;top:237.50px;font-size:15px;color:#000;">Block Length (m)</div>
<div class="a" style="left:975.5px;top:237px;width:138.5px;height:21.5px;background:#fff;border:1px solid;border-color:#a0a0a0 #fff #fff #a0a0a0;box-shadow:inset 1px 1px #696969,inset -1px -1px #e3e3e3;"></div>
<div class="a t " style="left:979.5px;top:241.14px;font-size:14.6px;color:#000;">0.4</div>
<div class="a" style="left:1116px;top:235px;width:27px;height:27px;background:#ece9d8;border:1px solid;border-color:#fff #696969 #696969 #fff;box-shadow:inset 1px 1px #e3e3e3,inset -1px -1px #a0a0a0;"></div>
<svg class="a" style="left:1116px;top:235px" width="27" height="27" viewBox="0 0 27 27"><defs><linearGradient id="gr" x1="0" y1="0" x2="1" y2="0"><stop offset="0" stop-color="#f8d878"/><stop offset="1" stop-color="#d8a030"/></linearGradient></defs><rect x="19" y="3" width="4" height="19.5" fill="url(#gr)"/><path d="M20.5 5.5h2M20.5 9.5h2M20.5 13.5h2M20.5 17.5h2M20.5 21h2" stroke="#7a5a10" stroke-width="1"/><path d="M9 7.2V16.4H17.8" stroke="#2a5fa8" stroke-width="2.1" stroke-linecap="round" fill="none"/><polygon points="4.8,14.8 4.8,21.3 11.2,21.3" fill="#d0dcea" stroke="#2a5fa8" stroke-width="1.9" stroke-linejoin="round"/><path d="M12.6 10.2V13.3H15.6" stroke="#000" stroke-width="1.4" fill="none"/></svg>
<div class="a" style="left:470.5px;top:271px;width:652.5px;height:374px;background:#f0f0f0;border:1px solid;border-color:#a0a0a0 #6e6e6e #6e6e6e #a0a0a0;box-shadow:inset 1px 1px #696969,inset -1px -1px #fff;box-sizing:border-box;"></div>
<div class="a" style="left:473px;top:273px;width:647px;height:27px;background:#f0f0f0;"></div>
<div class="a" style="left:473px;top:298px;width:647px;height:2px;background:#696969;"></div>
<div class="a" style="left:504px;top:300px;width:616px;height:340.5px;background:#fff;"></div>
<div class="a" style="left:473px;top:325.0px;width:31px;height:1.0px;background:#808080;"></div>
<div class="a" style="left:504px;top:325.0px;width:616px;height:1.0px;background:#d0d0d0;"></div>
<div class="a" style="left:473px;top:351.0px;width:31px;height:1.0px;background:#808080;"></div>
<div class="a" style="left:504px;top:351.0px;width:616px;height:1.0px;background:#d0d0d0;"></div>
<div class="a" style="left:473px;top:377.5px;width:31px;height:1.0px;background:#808080;"></div>
<div class="a" style="left:504px;top:377.5px;width:616px;height:1.0px;background:#d0d0d0;"></div>
<div class="a" style="left:473px;top:404.0px;width:31px;height:1.0px;background:#808080;"></div>
<div class="a" style="left:504px;top:404.0px;width:616px;height:1.0px;background:#d0d0d0;"></div>
<div class="a" style="left:473px;top:430.5px;width:31px;height:1.0px;background:#808080;"></div>
<div class="a" style="left:504px;top:430.5px;width:616px;height:1.0px;background:#d0d0d0;"></div>
<div class="a" style="left:473px;top:457.0px;width:31px;height:1.0px;background:#808080;"></div>
<div class="a" style="left:504px;top:457.0px;width:616px;height:1.0px;background:#d0d0d0;"></div>
<div class="a" style="left:473px;top:482.8px;width:31px;height:1.0px;background:#808080;"></div>
<div class="a" style="left:504px;top:482.8px;width:616px;height:1.0px;background:#d0d0d0;"></div>
<div class="a" style="left:473px;top:508.8px;width:31px;height:1.0px;background:#808080;"></div>
<div class="a" style="left:504px;top:508.8px;width:616px;height:1.0px;background:#d0d0d0;"></div>
<div class="a" style="left:473px;top:535.0px;width:31px;height:1.0px;background:#808080;"></div>
<div class="a" style="left:504px;top:535.0px;width:616px;height:1.0px;background:#d0d0d0;"></div>
<div class="a" style="left:473px;top:561.3px;width:31px;height:1.0px;background:#808080;"></div>
<div class="a" style="left:504px;top:561.3px;width:616px;height:1.0px;background:#d0d0d0;"></div>
<div class="a" style="left:473px;top:587.5px;width:31px;height:1.0px;background:#808080;"></div>
<div class="a" style="left:504px;top:587.5px;width:616px;height:1.0px;background:#d0d0d0;"></div>
<div class="a" style="left:473px;top:614.0px;width:31px;height:1.0px;background:#808080;"></div>
<div class="a" style="left:504px;top:614.0px;width:616px;height:1.0px;background:#d0d0d0;"></div>
<div class="a" style="left:473px;top:640.0px;width:31px;height:1.0px;background:#808080;"></div>
<div class="a" style="left:504px;top:640.0px;width:616px;height:1.0px;background:#d0d0d0;"></div>
<div class="a" style="left:503px;top:273px;width:1.5px;height:367.5px;background:#808080;"></div>
<div class="a" style="left:588.0px;top:273px;width:1.0px;height:26px;background:#a0a0a0;"></div>
<div class="a" style="left:589.0px;top:273px;width:1.0px;height:26px;background:#fff;"></div>
<div class="a" style="left:588.0px;top:300px;width:1.0px;height:340.5px;background:#d0d0d0;"></div>
<div class="a" style="left:699.0px;top:273px;width:1.0px;height:26px;background:#a0a0a0;"></div>
<div class="a" style="left:700.0px;top:273px;width:1.0px;height:26px;background:#fff;"></div>
<div class="a" style="left:699.0px;top:300px;width:1.0px;height:340.5px;background:#d0d0d0;"></div>
<div class="a" style="left:778.0px;top:273px;width:1.0px;height:26px;background:#a0a0a0;"></div>
<div class="a" style="left:779.0px;top:273px;width:1.0px;height:26px;background:#fff;"></div>
<div class="a" style="left:778.0px;top:300px;width:1.0px;height:340.5px;background:#d0d0d0;"></div>
<div class="a" style="left:886.7px;top:273px;width:1.0px;height:26px;background:#a0a0a0;"></div>
<div class="a" style="left:887.7px;top:273px;width:1.0px;height:26px;background:#fff;"></div>
<div class="a" style="left:886.7px;top:300px;width:1.0px;height:340.5px;background:#d0d0d0;"></div>
<div class="a" style="left:996.9px;top:273px;width:1.0px;height:26px;background:#a0a0a0;"></div>
<div class="a" style="left:997.9px;top:273px;width:1.0px;height:26px;background:#fff;"></div>
<div class="a" style="left:996.9px;top:300px;width:1.0px;height:340.5px;background:#d0d0d0;"></div>
<div class="a t " style="left:509.7px;top:277.70px;font-size:15px;color:#000;">Height (H)</div>
<div class="a t " style="left:594.7px;top:278.46px;font-size:14.1px;color:#000;">Base Width (B)</div>
<div class="a t " style="left:705.7px;top:278.30px;font-size:14.3px;color:#000;">Depth (D)</div>
<div class="a t " style="left:784.7px;top:278.21px;font-size:14.4px;color:#000;">Key Height (T)</div>
<div class="a t " style="left:893.4000000000001px;top:278.04px;font-size:14.6px;color:#000;">Key Width (W)</div>
<div class="a t " style="left:1003.6px;top:278.30px;font-size:14.3px;color:#000;">300series Height</div>
<div class="a t" style="left:297.5px;width:200px;text-align:right;top:305.23px;font-size:14.5px;color:#000;">1</div>
<div class="a t " style="left:507.9px;top:302.80px;font-size:15px;color:#000;transform:scaleX(0.92);transform-origin:0 0;">600</div>
<div class="a t " style="left:592.9px;top:302.80px;font-size:15px;color:#000;transform:scaleX(0.92);transform-origin:0 0;">700</div>
<div class="a t " style="left:703.9px;top:302.80px;font-size:15px;color:#000;transform:scaleX(0.92);transform-origin:0 0;">200</div>
<div class="a t " style="left:782.9px;top:302.80px;font-size:15px;color:#000;transform:scaleX(0.92);transform-origin:0 0;">0</div>
<div class="a t " style="left:891.6px;top:302.80px;font-size:15px;color:#000;transform:scaleX(0.92);transform-origin:0 0;">0</div>
<div class="a t " style="left:1001.8px;top:302.80px;font-size:15px;color:#000;transform:scaleX(0.92);transform-origin:0 0;">0</div>
<div class="a t" style="left:297.5px;width:200px;text-align:right;top:330.73px;font-size:14.5px;color:#000;">2</div>
<div class="a t " style="left:507.9px;top:328.30px;font-size:15px;color:#000;transform:scaleX(0.92);transform-origin:0 0;">800</div>
<div class="a t " style="left:592.9px;top:328.30px;font-size:15px;color:#000;transform:scaleX(0.92);transform-origin:0 0;">800</div>
<div class="a t " style="left:703.9px;top:328.30px;font-size:15px;color:#000;transform:scaleX(0.92);transform-origin:0 0;">200</div>
<div class="a t " style="left:782.9px;top:328.30px;font-size:15px;color:#000;transform:scaleX(0.92);transform-origin:0 0;">0</div>
<div class="a t " style="left:891.6px;top:328.30px;font-size:15px;color:#000;transform:scaleX(0.92);transform-origin:0 0;">0</div>
<div class="a t " style="left:1001.8px;top:328.30px;font-size:15px;color:#000;transform:scaleX(0.92);transform-origin:0 0;">0</div>
<div class="a t" style="left:297.5px;width:200px;text-align:right;top:356.73px;font-size:14.5px;color:#000;">3</div>
<div class="a t " style="left:507.9px;top:354.30px;font-size:15px;color:#000;transform:scaleX(0.92);transform-origin:0 0;">1000</div>
<div class="a t " style="left:592.9px;top:354.30px;font-size:15px;color:#000;transform:scaleX(0.92);transform-origin:0 0;">1000</div>
<div class="a t " style="left:703.9px;top:354.30px;font-size:15px;color:#000;transform:scaleX(0.92);transform-origin:0 0;">200</div>
<div class="a t " style="left:782.9px;top:354.30px;font-size:15px;color:#000;transform:scaleX(0.92);transform-origin:0 0;">0</div>
<div class="a t " style="left:891.6px;top:354.30px;font-size:15px;color:#000;transform:scaleX(0.92);transform-origin:0 0;">0</div>
<div class="a t " style="left:1001.8px;top:354.30px;font-size:15px;color:#000;transform:scaleX(0.92);transform-origin:0 0;">0</div>
<div class="a t" style="left:297.5px;width:200px;text-align:right;top:383.23px;font-size:14.5px;color:#000;">4</div>
<div class="a t " style="left:507.9px;top:380.80px;font-size:15px;color:#000;transform:scaleX(0.92);transform-origin:0 0;">1200</div>
<div class="a t " style="left:592.9px;top:380.80px;font-size:15px;color:#000;transform:scaleX(0.92);transform-origin:0 0;">1200</div>
<div class="a t " style="left:703.9px;top:380.80px;font-size:15px;color:#000;transform:scaleX(0.92);transform-origin:0 0;">250</div>
<div class="a t " style="left:782.9px;top:380.80px;font-size:15px;color:#000;transform:scaleX(0.92);transform-origin:0 0;">0</div>
<div class="a t " style="left:891.6px;top:380.80px;font-size:15px;color:#000;transform:scaleX(0.92);transform-origin:0 0;">0</div>
<div class="a t " style="left:1001.8px;top:380.80px;font-size:15px;color:#000;transform:scaleX(0.92);transform-origin:0 0;">0</div>
<div class="a t" style="left:297.5px;width:200px;text-align:right;top:409.73px;font-size:14.5px;color:#000;">5</div>
<div class="a t " style="left:507.9px;top:407.30px;font-size:15px;color:#000;transform:scaleX(0.92);transform-origin:0 0;">1400</div>
<div class="a t " style="left:592.9px;top:407.30px;font-size:15px;color:#000;transform:scaleX(0.92);transform-origin:0 0;">1400</div>
<div class="a t " style="left:703.9px;top:407.30px;font-size:15px;color:#000;transform:scaleX(0.92);transform-origin:0 0;">250</div>
<div class="a t " style="left:782.9px;top:407.30px;font-size:15px;color:#000;transform:scaleX(0.92);transform-origin:0 0;">0</div>
<div class="a t " style="left:891.6px;top:407.30px;font-size:15px;color:#000;transform:scaleX(0.92);transform-origin:0 0;">0</div>
<div class="a t " style="left:1001.8px;top:407.30px;font-size:15px;color:#000;transform:scaleX(0.92);transform-origin:0 0;">0</div>
<div class="a t" style="left:297.5px;width:200px;text-align:right;top:436.23px;font-size:14.5px;color:#000;">6</div>
<div class="a t " style="left:507.9px;top:433.80px;font-size:15px;color:#000;transform:scaleX(0.92);transform-origin:0 0;">1600</div>
<div class="a t " style="left:592.9px;top:433.80px;font-size:15px;color:#000;transform:scaleX(0.92);transform-origin:0 0;">1800</div>
<div class="a t " style="left:703.9px;top:433.80px;font-size:15px;color:#000;transform:scaleX(0.92);transform-origin:0 0;">250</div>
<div class="a t " style="left:782.9px;top:433.80px;font-size:15px;color:#000;transform:scaleX(0.92);transform-origin:0 0;">200</div>
<div class="a t " style="left:891.6px;top:433.80px;font-size:15px;color:#000;transform:scaleX(0.92);transform-origin:0 0;">200</div>
<div class="a t " style="left:1001.8px;top:433.80px;font-size:15px;color:#000;transform:scaleX(0.92);transform-origin:0 0;">0</div>
<div class="a t" style="left:297.5px;width:200px;text-align:right;top:462.73px;font-size:14.5px;color:#000;">7</div>
<div class="a t " style="left:507.9px;top:460.30px;font-size:15px;color:#000;transform:scaleX(0.92);transform-origin:0 0;">1800</div>
<div class="a t " style="left:592.9px;top:460.30px;font-size:15px;color:#000;transform:scaleX(0.92);transform-origin:0 0;">2200</div>
<div class="a t " style="left:703.9px;top:460.30px;font-size:15px;color:#000;transform:scaleX(0.92);transform-origin:0 0;">350</div>
<div class="a t " style="left:782.9px;top:460.30px;font-size:15px;color:#000;transform:scaleX(0.92);transform-origin:0 0;">250</div>
<div class="a t " style="left:891.6px;top:460.30px;font-size:15px;color:#000;transform:scaleX(0.92);transform-origin:0 0;">200</div>
<div class="a t " style="left:1001.8px;top:460.30px;font-size:15px;color:#000;transform:scaleX(0.92);transform-origin:0 0;">0</div>
<div class="a t" style="left:297.5px;width:200px;text-align:right;top:488.53px;font-size:14.5px;color:#000;">8</div>
<div class="a t " style="left:507.9px;top:486.10px;font-size:15px;color:#000;transform:scaleX(0.92);transform-origin:0 0;">2000</div>
<div class="a t " style="left:592.9px;top:486.10px;font-size:15px;color:#000;transform:scaleX(0.92);transform-origin:0 0;">2400</div>
<div class="a t " style="left:703.9px;top:486.10px;font-size:15px;color:#000;transform:scaleX(0.92);transform-origin:0 0;">350</div>
<div class="a t " style="left:782.9px;top:486.10px;font-size:15px;color:#000;transform:scaleX(0.92);transform-origin:0 0;">250</div>
<div class="a t " style="left:891.6px;top:486.10px;font-size:15px;color:#000;transform:scaleX(0.92);transform-origin:0 0;">300</div>
<div class="a t " style="left:1001.8px;top:486.10px;font-size:15px;color:#000;transform:scaleX(0.92);transform-origin:0 0;">200</div>
<div class="a t" style="left:297.5px;width:200px;text-align:right;top:514.53px;font-size:14.5px;color:#000;">9</div>
<div class="a t " style="left:507.9px;top:512.10px;font-size:15px;color:#000;transform:scaleX(0.92);transform-origin:0 0;">2200</div>
<div class="a t " style="left:592.9px;top:512.10px;font-size:15px;color:#000;transform:scaleX(0.92);transform-origin:0 0;">2700</div>
<div class="a t " style="left:703.9px;top:512.10px;font-size:15px;color:#000;transform:scaleX(0.92);transform-origin:0 0;">350</div>
<div class="a t " style="left:782.9px;top:512.10px;font-size:15px;color:#000;transform:scaleX(0.92);transform-origin:0 0;">300</div>
<div class="a t " style="left:891.6px;top:512.10px;font-size:15px;color:#000;transform:scaleX(0.92);transform-origin:0 0;">300</div>
<div class="a t " style="left:1001.8px;top:512.10px;font-size:15px;color:#000;transform:scaleX(0.92);transform-origin:0 0;">400</div>
<div class="a t" style="left:297.5px;width:200px;text-align:right;top:540.73px;font-size:14.5px;color:#000;">10</div>
<div class="a t " style="left:507.9px;top:538.30px;font-size:15px;color:#000;transform:scaleX(0.92);transform-origin:0 0;">2400</div>
<div class="a t " style="left:592.9px;top:538.30px;font-size:15px;color:#000;transform:scaleX(0.92);transform-origin:0 0;">2900</div>
<div class="a t " style="left:703.9px;top:538.30px;font-size:15px;color:#000;transform:scaleX(0.92);transform-origin:0 0;">350</div>
<div class="a t " style="left:782.9px;top:538.30px;font-size:15px;color:#000;transform:scaleX(0.92);transform-origin:0 0;">300</div>
<div class="a t " style="left:891.6px;top:538.30px;font-size:15px;color:#000;transform:scaleX(0.92);transform-origin:0 0;">300</div>
<div class="a t " style="left:1001.8px;top:538.30px;font-size:15px;color:#000;transform:scaleX(0.92);transform-origin:0 0;">600</div>
<div class="a t" style="left:297.5px;width:200px;text-align:right;top:567.03px;font-size:14.5px;color:#000;">11</div>
<div class="a t " style="left:507.9px;top:564.60px;font-size:15px;color:#000;transform:scaleX(0.92);transform-origin:0 0;">2600</div>
<div class="a t " style="left:592.9px;top:564.60px;font-size:15px;color:#000;transform:scaleX(0.92);transform-origin:0 0;">3200</div>
<div class="a t " style="left:703.9px;top:564.60px;font-size:15px;color:#000;transform:scaleX(0.92);transform-origin:0 0;">350</div>
<div class="a t " style="left:782.9px;top:564.60px;font-size:15px;color:#000;transform:scaleX(0.92);transform-origin:0 0;">350</div>
<div class="a t " style="left:891.6px;top:564.60px;font-size:15px;color:#000;transform:scaleX(0.92);transform-origin:0 0;">300</div>
<div class="a t " style="left:1001.8px;top:564.60px;font-size:15px;color:#000;transform:scaleX(0.92);transform-origin:0 0;">800</div>
<div class="a t" style="left:297.5px;width:200px;text-align:right;top:593.23px;font-size:14.5px;color:#000;">12</div>
<div class="a t " style="left:507.9px;top:590.80px;font-size:15px;color:#000;transform:scaleX(0.92);transform-origin:0 0;">2800</div>
<div class="a t " style="left:592.9px;top:590.80px;font-size:15px;color:#000;transform:scaleX(0.92);transform-origin:0 0;">3400</div>
<div class="a t " style="left:703.9px;top:590.80px;font-size:15px;color:#000;transform:scaleX(0.92);transform-origin:0 0;">350</div>
<div class="a t " style="left:782.9px;top:590.80px;font-size:15px;color:#000;transform:scaleX(0.92);transform-origin:0 0;">350</div>
<div class="a t " style="left:891.6px;top:590.80px;font-size:15px;color:#000;transform:scaleX(0.92);transform-origin:0 0;">300</div>
<div class="a t " style="left:1001.8px;top:590.80px;font-size:15px;color:#000;transform:scaleX(0.92);transform-origin:0 0;">1000</div>
<div class="a t" style="left:297.5px;width:200px;text-align:right;top:619.73px;font-size:14.5px;color:#000;">13</div>
<div class="a t " style="left:507.9px;top:617.30px;font-size:15px;color:#000;transform:scaleX(0.92);transform-origin:0 0;">3000</div>
<div class="a t " style="left:592.9px;top:617.30px;font-size:15px;color:#000;transform:scaleX(0.92);transform-origin:0 0;">3700</div>
<div class="a t " style="left:703.9px;top:617.30px;font-size:15px;color:#000;transform:scaleX(0.92);transform-origin:0 0;">350</div>
<div class="a t " style="left:782.9px;top:617.30px;font-size:15px;color:#000;transform:scaleX(0.92);transform-origin:0 0;">400</div>
<div class="a t " style="left:891.6px;top:617.30px;font-size:15px;color:#000;transform:scaleX(0.92);transform-origin:0 0;">300</div>
<div class="a t " style="left:1001.8px;top:617.30px;font-size:15px;color:#000;transform:scaleX(0.92);transform-origin:0 0;">1200</div>
<div class="a" style="left:1125px;top:270.5px;width:30.5px;height:27.0px;background:#f0f0f0;border:1px solid;border-color:#fff #696969 #696969 #fff;box-shadow:inset 1px 1px #e3e3e3,inset -1px -1px #a0a0a0;"></div>
<svg class="a" style="left:1125px;top:270.5px" width="30.5" height="27.0" viewBox="0 0 30.5 27.0"><defs><linearGradient id="ga" x1="0" y1="0" x2="1" y2="1"><stop offset="0" stop-color="#d8e8ff"/><stop offset="0.5" stop-color="#80b0f4"/><stop offset="1" stop-color="#3a72d8"/></linearGradient></defs><rect x="6.5" y="4.7" width="17" height="17" fill="#ece9d8"/><polygon points="15,7 22.8,15.4 18,15.4 18,18.5 11.7,18.5 11.7,15.4 6.8,15.4" fill="url(#ga)" stroke="#2050b0" stroke-width="1" stroke-linejoin="round"/><path d="M15 7L22.8 15.4" stroke="#101828" stroke-width="1"/></svg>
<div class="a" style="left:1125px;top:300px;width:30.5px;height:27.5px;background:#f0f0f0;border:1px solid;border-color:#fff #696969 #696969 #fff;box-shadow:inset 1px 1px #e3e3e3,inset -1px -1px #a0a0a0;"></div>
<svg class="a" style="left:1125px;top:300px" width="30.5" height="27.5" viewBox="0 0 30.5 27.5"><defs><linearGradient id="ga" x1="0" y1="0" x2="1" y2="1"><stop offset="0" stop-color="#d8e8ff"/><stop offset="0.5" stop-color="#80b0f4"/><stop offset="1" stop-color="#3a72d8"/></linearGradient></defs><rect x="6.5" y="4.7" width="17" height="17" fill="#ece9d8"/><polygon points="11.7,7.7 18,7.7 18,10.4 22.8,10.4 15,18.9 6.8,10.4 11.7,10.4" fill="url(#ga)" stroke="#2050b0" stroke-width="1" stroke-linejoin="round"/><path d="M22.8 10.4L15 18.9" stroke="#101828" stroke-width="1"/></svg>
<div class="a" style="left:1125px;top:330.5px;width:30.5px;height:29.5px;background:#f0f0f0;border:1px solid;border-color:#fff #696969 #696969 #fff;box-shadow:inset 1px 1px #e3e3e3,inset -1px -1px #a0a0a0;"></div>
<svg class="a" style="left:1125px;top:330.5px" width="30.5" height="29.5" viewBox="0 0 30.5 29.5"><rect x="5.3" y="4.5" width="19.6" height="19.8" fill="#ece9d8"/><path d="M8.3 7.8L23.3 22.5M23.3 10.5L8.3 22.5" stroke="#a8b0c8" stroke-width="2.6" stroke-linecap="round" transform="translate(0.8,0.8)"/><path d="M7.3 6.8L22.3 21.5M22.3 9.5L7.3 21.5" stroke="#e3103c" stroke-width="2.6" stroke-linecap="round"/></svg>
<div class="a" style="left:1125px;top:363px;width:30.5px;height:27px;background:#f0f0f0;border:1px solid;border-color:#fff #696969 #696969 #fff;box-shadow:inset 1px 1px #e3e3e3,inset -1px -1px #a0a0a0;"></div>
<svg class="a" style="left:1125px;top:363px" width="30.5" height="27" viewBox="0 0 30.5 27"><defs><linearGradient id="ga" x1="0" y1="0" x2="1" y2="1"><stop offset="0" stop-color="#d8e8ff"/><stop offset="0.5" stop-color="#80b0f4"/><stop offset="1" stop-color="#3a72d8"/></linearGradient></defs><rect x="6.5" y="5" width="17" height="16.3" fill="#ece9d8"/><polygon points="15.7,6.6 22.8,13.4 18.5,13.4 18.5,16.2 12.5,16.2 12.5,13.4 8.9,13.4" fill="url(#ga)" stroke="#2050b0" stroke-width="1" stroke-linejoin="round"/><path d="M15.7 6.6L22.8 13.4" stroke="#b01030" stroke-width="1"/><rect x="8.9" y="17.8" width="13.9" height="1.4" fill="#4060c0"/><rect x="8.9" y="19.2" width="13.9" height="1.4" fill="#b01840"/></svg>
<div class="a" style="left:1125px;top:393px;width:30.5px;height:27px;background:#f0f0f0;border:1px solid;border-color:#fff #696969 #696969 #fff;box-shadow:inset 1px 1px #e3e3e3,inset -1px -1px #a0a0a0;"></div>
<svg class="a" style="left:1125px;top:393px" width="30.5" height="27" viewBox="0 0 30.5 27"><defs><linearGradient id="ga" x1="0" y1="0" x2="1" y2="1"><stop offset="0" stop-color="#d8e8ff"/><stop offset="0.5" stop-color="#80b0f4"/><stop offset="1" stop-color="#3a72d8"/></linearGradient></defs><rect x="6.5" y="4.5" width="17" height="17" fill="#ece9d8"/><rect x="8.9" y="6.5" width="13.9" height="1.4" fill="#b01840"/><rect x="8.9" y="7.9" width="13.9" height="1.4" fill="#4060c0"/><polygon points="12.5,11.6 18.5,11.6 18.5,14.4 22.8,14.4 15.7,21.5 8.9,14.4 12.5,14.4" fill="url(#ga)" stroke="#2050b0" stroke-width="1" stroke-linejoin="round"/><path d="M22.8 14.4L15.7 21.5" stroke="#b01030" stroke-width="1"/></svg>
<div class="a" style="left:472.5px;top:650px;width:680.5px;height:21px;background:#f0f0f0;border:1px solid;border-color:#a0a0a0 #fff #fff #a0a0a0;box-shadow:inset 1px 1px #696969,inset -1px -1px #e3e3e3;"></div>
<div class="a" style="left:613px;top:677px;width:55px;height:26px;background:#f0f0f0;border:1px solid;border-color:#fff #696969 #696969 #fff;box-shadow:inset 1px 1px #e3e3e3,inset -1px -1px #a0a0a0;"></div>
<div class="a t" style="left:440.5px;width:400px;text-align:center;top:683.15px;font-size:14px;color:#000;">Update</div>
<div class="a" style="left:957px;top:677px;width:54px;height:25.5px;background:#f0f0f0;border:1px solid;border-color:#fff #696969 #696969 #fff;box-shadow:inset 1px 1px #e3e3e3,inset -1px -1px #a0a0a0;"></div>
<div class="a t" style="left:784px;width:400px;text-align:center;top:683.15px;font-size:14px;color:#000;">Cancel</div>
</body></html>
